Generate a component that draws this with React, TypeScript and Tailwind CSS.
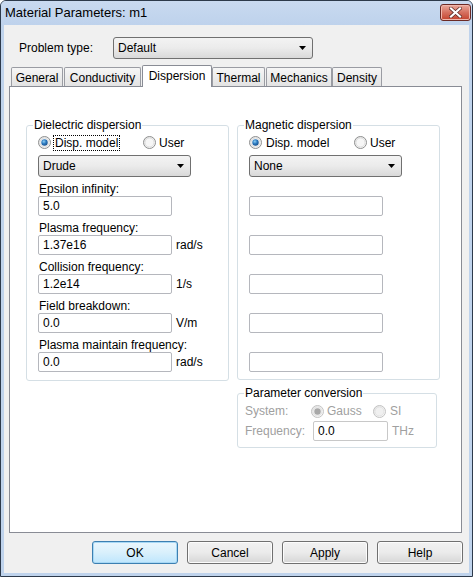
import React from "react";

const FONT = { fontFamily: '"Liberation Sans", Arial, sans-serif' };

function Radio({ checked, disabled }: { checked?: boolean; disabled?: boolean }) {
  return (
    <svg width="13" height="13" viewBox="0 0 13 13" className="shrink-0">
      <defs>
        <linearGradient id="rgOuter" x1="0" y1="0" x2="1" y2="1">
          <stop offset="0" stopColor="#e4e4e4" />
          <stop offset="1" stopColor="#ffffff" />
        </linearGradient>
        <radialGradient id="rgBlue" cx="0.4" cy="0.35" r="0.7">
          <stop offset="0" stopColor="#8fd0f5" />
          <stop offset="0.5" stopColor="#2c7ac0" />
          <stop offset="1" stopColor="#1a4f8a" />
        </radialGradient>
      </defs>
      <circle cx="6.5" cy="6.5" r="6" fill="url(#rgOuter)" stroke={disabled ? "#c2c2c2" : "#8e8f8f"} />
      <circle cx="6.5" cy="6.5" r="4.5" fill={disabled ? "#f0f0f0" : "#f6f6f6"} stroke={disabled ? "#d8d8d8" : "#d0d0d0"} strokeWidth="0.6" />
      {checked && <circle cx="6.5" cy="6.5" r="3.2" fill={disabled ? "#a8a8a8" : "url(#rgBlue)"} />}
    </svg>
  );
}

function Arrow() {
  return (
    <svg width="7" height="4" viewBox="0 0 7 4" className="shrink-0">
      <path d="M0 0H7L3.5 4Z" fill="#000" />
    </svg>
  );
}

function Combo({ text, w }: { text: string; w: string }) {
  return (
    <div
      className={`${w} h-[22px] border border-[#707070] rounded-[3px] bg-linear-to-b from-[#f3f3f3] via-[#ebebeb] to-[#d9d9d9] flex items-center justify-between pl-[4px] pr-[6px] leading-[14px]`}
    >
      <span>{text}</span>
      <Arrow />
    </div>
  );
}

function Input({ value, w = "w-[134px]", disabled }: { value?: string; w?: string; disabled?: boolean }) {
  return (
    <div
      className={`${w} h-[20px] border ${disabled ? "border-[#c8c8c8]" : "border-[#b5b7bd]"} rounded-[2px] bg-white flex items-center pl-[4px] leading-[14px] text-black`}
    >
      {value}
    </div>
  );
}

function Field({ label, value, unit }: { label: string; value: string; unit?: string }) {
  return (
    <div className="flex flex-col mt-[5px]">
      <div className="h-[14px] leading-[14px] pl-[1px]">{label}</div>
      <div className="flex items-center">
        <Input value={value} />
        {unit && <span className="ml-[4px] leading-[14px]">{unit}</span>}
      </div>
    </div>
  );
}

function EmptyField() {
  return (
    <div className="flex flex-col mt-[5px]">
      <div className="h-[14px]" />
      <Input />
    </div>
  );
}

function Tab({ label, w, ml, selected }: { label: string; w: string; ml: string; selected?: boolean }) {
  if (selected) {
    return (
      <div
        className={`${w} ${ml} h-[22px] -mb-[1px] relative z-10 bg-white border border-b-0 border-[#898c95] rounded-t-[2px] flex justify-center pt-[3px] leading-[14px]`}
      >
        {label}
      </div>
    );
  }
  return (
    <div
      className={`${w} ${ml} h-[19px] bg-linear-to-b from-[#f6f6f6] to-[#e3e3e3] border border-b-0 border-[#9a9ca3] rounded-t-[2px] flex justify-center pt-[3px] leading-[14px]`}
    >
      {label}
    </div>
  );
}

function Button({ label, def }: { label: string; def?: boolean }) {
  return (
    <div
      className={`w-[86px] h-[23px] rounded-[3px] border flex items-center justify-center leading-[14px] ${
        def
          ? "border-[#3c7fb1] bg-linear-to-b from-[#eaf6fd] via-[#d9f0fc] to-[#bee6fd] shadow-[inset_0_0_0_1px_#a7d8f5]"
          : "border-[#707070] bg-linear-to-b from-[#f2f2f2] via-[#ebebeb] to-[#d6d6d6] shadow-[inset_0_0_0_1px_#fcfcfc]"
      }`}
    >
      {label}
    </div>
  );
}

export default function App() {
  return (
    <div style={FONT} className="w-[473px] h-[577px] text-[12px] text-black">
      <div className="w-full h-full border border-[#2d3a4b] rounded-t-[6px] bg-[#bfd3ec] flex flex-col px-[3px] pb-[3px] overflow-hidden">
        {/* Title bar */}
        <div className="h-[24px] shrink-0 flex items-center justify-between pl-[4px] pr-[1px] bg-linear-to-b from-[#c9daf0] to-[#bed2ec] -mx-[3px] px-[7px]">
          <span className="text-[13px] leading-[16px] text-black">Material Parameters: m1</span>
          <div className="w-[31px] h-[17px] mb-[2px] rounded-[3px] border border-[#6b2a25] bg-linear-to-b from-[#e9a99c] via-[#d5705f] to-[#c2412c] flex items-center justify-center shadow-[inset_0_0_0_1px_#f0b8ad]">
            <svg width="13" height="11" viewBox="0 0 13 11">
              <path d="M2 1.5L11 9.5M11 1.5L2 9.5" stroke="#5a2a26" strokeWidth="3.6" strokeLinecap="square" />
              <path d="M2 1.5L11 9.5M11 1.5L2 9.5" stroke="#ffffff" strokeWidth="2.2" strokeLinecap="square" />
            </svg>
          </div>
        </div>

        {/* Client area */}
        <div className="flex-1 bg-[#f0f0f0] flex flex-col">
          {/* Problem type */}
          <div className="flex items-center mt-[12px] pl-[15px]">
            <span className="w-[94px] leading-[14px]">Problem type:</span>
            <Combo text="Default" w="w-[200px]" />
          </div>

          {/* Tabs */}
          <div className="ml-[5px] mr-[7px] mt-[6px] flex flex-col">
            <div className="h-[21px] flex items-end pl-[2px]">
              <Tab label="General" w="w-[52px]" ml="ml-0" />
              <Tab label="Conductivity" w="w-[77px]" ml="ml-[1px]" />
              <Tab label="Dispersion" w="w-[70px]" ml="ml-[1px]" selected />
              <Tab label="Thermal" w="w-[53px]" ml="ml-0" />
              <Tab label="Mechanics" w="w-[66px]" ml="ml-[1px]" />
              <Tab label="Density" w="w-[50px]" ml="ml-0" />
            </div>
            <div className="h-[447px] border border-[#898c95] bg-white pt-[31px] pl-[16px] flex gap-[8px]">
              {/* Dielectric dispersion */}
              <fieldset className="w-[203px] h-[263px] border border-[#d5dfe5] rounded-[3px] p-0 m-0">
                <legend className="ml-[6px] px-[1px] leading-[14px]">Dielectric dispersion</legend>
                <div className="px-[11px] flex flex-col">
                  <div className="h-[17px] mt-[2px] flex items-center">
                    <div className="w-[105px] flex items-center">
                      <Radio checked />
                      <span className="ml-[2px] border border-dotted border-black px-[1px] leading-[14px]">Disp. model</span>
                    </div>
                    <div className="flex items-center">
                      <Radio />
                      <span className="ml-[3px] leading-[14px]">User</span>
                    </div>
                  </div>
                  <div className="mt-[4px]">
                    <Combo text="Drude" w="w-[153px]" />
                  </div>
                  <Field label="Epsilon infinity:" value="5.0" />
                  <Field label="Plasma frequency:" value="1.37e16" unit="rad/s" />
                  <Field label="Collision frequency:" value="1.2e14" unit="1/s" />
                  <Field label="Field breakdown:" value="0.0" unit="V/m" />
                  <Field label="Plasma maintain frequency:" value="0.0" unit="rad/s" />
                </div>
              </fieldset>

              {/* Right column */}
              <div className="flex flex-col">
                <fieldset className="w-[203px] h-[262px] border border-[#d5dfe5] rounded-[3px] p-0 m-0">
                  <legend className="ml-[6px] px-[1px] leading-[14px]">Magnetic dispersion</legend>
                  <div className="px-[11px] flex flex-col">
                    <div className="h-[17px] mt-[2px] flex items-center">
                      <div className="w-[105px] flex items-center">
                        <Radio checked />
                        <span className="ml-[4px] leading-[14px]">Disp. model</span>
                      </div>
                      <div className="flex items-center">
                        <Radio />
                        <span className="ml-[3px] leading-[14px]">User</span>
                      </div>
                    </div>
                    <div className="mt-[4px]">
                      <Combo text="None" w="w-[153px]" />
                    </div>
                    <EmptyField />
                    <EmptyField />
                    <EmptyField />
                    <EmptyField />
                    <EmptyField />
                  </div>
                </fieldset>

                <fieldset className="w-[200px] h-[62px] mt-[6px] border border-[#d5dfe5] rounded-[3px] p-0 m-0">
                  <legend className="ml-[6px] px-[1px] leading-[14px]">Parameter conversion</legend>
                  <div className="pl-[7px] flex flex-col text-[#a0a0a0]">
                    <div className="h-[16px] mt-[3px] flex items-center">
                      <span className="w-[66px] leading-[14px]">System:</span>
                      <div className="w-[62px] flex items-center">
                        <Radio checked disabled />
                        <span className="ml-[3px] leading-[14px]">Gauss</span>
                      </div>
                      <div className="flex items-center">
                        <Radio disabled />
                        <span className="ml-[4px] leading-[14px]">SI</span>
                      </div>
                    </div>
                    <div className="h-[20px] mt-[2px] flex items-center">
                      <span className="w-[68px] leading-[14px]">Frequency:</span>
                      <Input value="0.0" w="w-[75px]" disabled />
                      <span className="ml-[4px] leading-[14px]">THz</span>
                    </div>
                  </div>
                </fieldset>
              </div>
            </div>
          </div>

          {/* Buttons */}
          <div className="mt-[8px] pr-[6px] flex justify-end gap-[9px]">
            <Button label="OK" def />
            <Button label="Cancel" />
            <Button label="Apply" />
            <Button label="Help" />
          </div>
        </div>
      </div>
    </div>
  );
}
